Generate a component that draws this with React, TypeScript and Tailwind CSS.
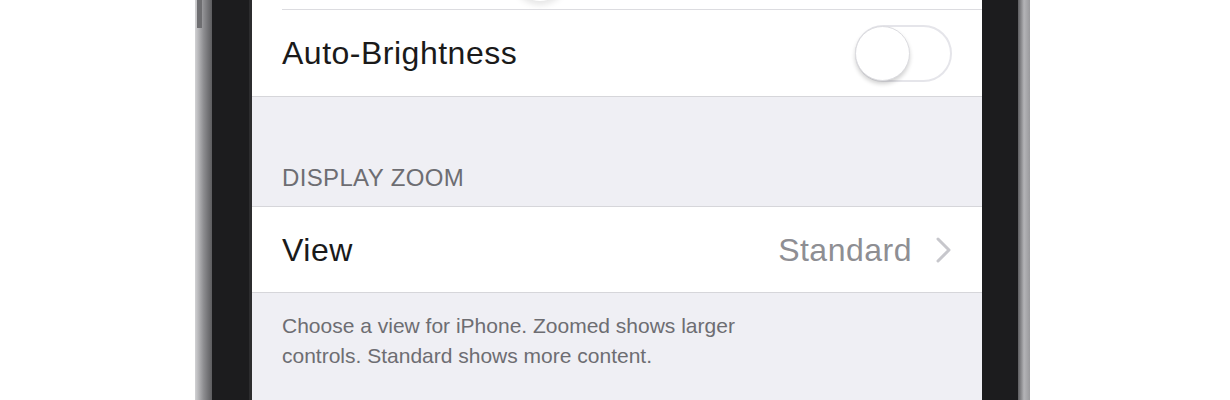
import React from "react";

function Toggle() {
  return (
    <div className="flex h-[57px] w-[97px] items-center rounded-full border-2 border-[#e5e5ea] bg-white">
      <div className="h-[55px] w-[55px] -ml-[2px] rounded-full border border-[#dcdce0] bg-white shadow-[0_3px_4px_rgba(0,0,0,0.18)]" />
    </div>
  );
}

function Chevron() {
  return (
    <svg width="16" height="26" viewBox="0 0 16 26" fill="none">
      <path d="M2 2l11 11L2 24" stroke="#c7c7cc" strokeWidth="3" strokeLinecap="round" strokeLinejoin="round" />
    </svg>
  );
}

export default function App() {
  return (
    <div className="h-[400px] w-full overflow-hidden bg-white font-['Liberation_Sans',Arial,sans-serif]">
      <div className="ml-[195px] flex h-[400px] w-[835px]">
        {/* Left frame + bezel */}
        <div className="relative w-[17px] bg-gradient-to-r from-[#d2d2d4] via-[#8e8e91] to-[#5c5c5f]">
          <div className="absolute left-[2px] top-0 h-[28px] w-[5px] bg-[#6e6e71]" />
        </div>
        <div className="w-[40px] border-r-[3px] border-[#2c2c2e] bg-[#1c1c1e]" />

        {/* Screen */}
        <div className="flex w-[730px] flex-col bg-[#efeff4]">
          {/* Brightness slider row, cut off */}
          <div className="relative h-[9px] overflow-hidden bg-white">
            <div className="absolute bottom-[8px] left-[260px] h-14 w-14 rounded-full bg-white shadow-[0_4px_6px_rgba(0,0,0,0.1)]" />
          </div>
          <div className="bg-white pl-[30px]">
            <div className="h-px bg-[#dcdce0]" />
          </div>

          <div className="flex h-[86px] items-center justify-between bg-white px-[30px]">
            <span className="text-[32px] leading-[40px] tracking-[0.5px] text-[#1a1a1a]">Auto-Brightness</span>
            <Toggle />
          </div>
          <div className="h-px bg-[#d6d6da]" />

          <div className="flex h-[109px] items-end px-[30px] pb-[14px]">
            <span className="text-[24px] leading-[28px] tracking-[0.35px] text-[#6d6d72]">DISPLAY ZOOM</span>
          </div>

          <div className="h-px bg-[#d6d6da]" />
          <div className="flex h-[85px] items-center justify-between bg-white px-[30px]">
            <span className="text-[32px] leading-[40px] tracking-[0.5px] text-[#1a1a1a]">View</span>
            <div className="flex items-center gap-[24px]">
              <span className="text-[32px] leading-[40px] tracking-[0.5px] text-[#8e8e93]">Standard</span>
              <Chevron />
            </div>
          </div>
          <div className="h-px bg-[#d6d6da]" />

          <div className="px-[30px] pt-[18px]">
            <p className="max-w-[480px] text-[21px] leading-[30px] text-[#6d6d72]">
              Choose a view for iPhone. Zoomed shows larger controls. Standard shows more content.
            </p>
          </div>
        </div>

        {/* Right bezel + frame */}
        <div className="w-[36px] bg-[#1c1c1e]" />
        <div className="w-[12px] bg-gradient-to-r from-[#5e5e61] via-[#b4b4b7] to-[#9a9a9d]" />
      </div>
    </div>
  );
}
